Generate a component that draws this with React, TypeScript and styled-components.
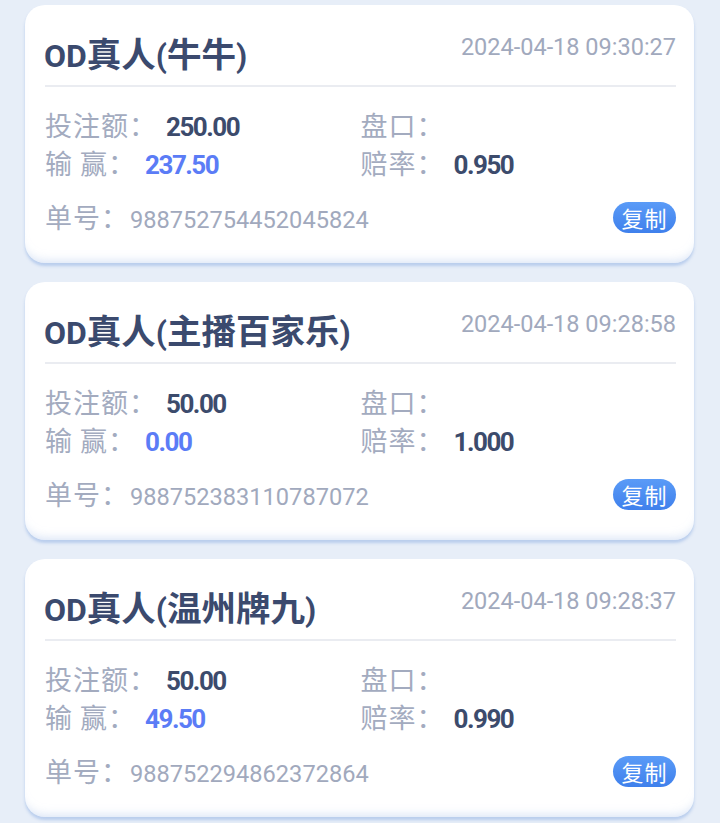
import React from "react";
import styled, { createGlobalStyle } from "styled-components";

const GlobalStyle = createGlobalStyle`
  html, body {
    margin: 0;
    padding: 0;
    background: #e7eef8;
  }
  body {
    font-family: "Roboto", "Noto Sans CJK SC", sans-serif;
    -webkit-font-smoothing: antialiased;
  }
`;

const Page = styled.div`
  display: flex;
  flex-direction: column;
  gap: 19px;
  padding: 5px 26px 8px 25px;
  background: #e7eef8;
  min-height: 823px;
  box-sizing: border-box;
`;

const Card = styled.div`
  background: #ffffff;
  border-radius: 20px;
  padding: 27px 18px 24px 20px;
  box-shadow: inset 0 -9px 10px -7px rgba(186, 206, 238, 0.55),
    0 3px 3px rgba(178, 200, 235, 0.85);
  box-sizing: border-box;
`;

const Header = styled.div`
  display: flex;
  justify-content: space-between;
  align-items: flex-start;
  padding-bottom: 10px;
  border-bottom: 2px solid #eaecf1;
`;

const Title = styled.h2`
  margin: 3px 0 0 -1px;
  height: 40px;
  font-family: "Roboto", "Noto Sans CJK SC", sans-serif;
  font-size: 32px;
  line-height: 40px;
  font-weight: 700;
  color: #3b4a6e;
  white-space: nowrap;
`;

const Han = styled.span`
  font-family: "Noto Sans CJK SC", sans-serif;
  font-size: 34.5px;
  line-height: 1;
  font-weight: 700;
`;

const Time = styled.span`
  font-family: "Roboto", sans-serif;
  font-size: 23.5px;
  line-height: 30px;
  color: #a1a9bd;
  white-space: nowrap;
`;

const Grid = styled.div`
  display: grid;
  grid-template-columns: 1fr 1fr;
  margin-top: 19px;
`;

const Field = styled.div`
  line-height: 38px;
  height: 38px;
  white-space: nowrap;
`;

const Label = styled.span`
  font-family: "Noto Sans CJK SC", sans-serif;
  font-size: 27px;
  letter-spacing: 1px;
  color: #a3abbf;
`;

const Value = styled.span<{ $accent?: boolean }>`
  margin-left: 9px;
  font-family: "Roboto", sans-serif;
  font-size: 26px;
  font-weight: 700;
  letter-spacing: -1.5px;
  color: ${(p) => (p.$accent ? "#5b7cf6" : "#3c4b6c")};
`;

const Footer = styled.div`
  display: flex;
  justify-content: space-between;
  align-items: center;
  margin-top: 19px;
  height: 38px;
`;

const OrderLine = styled.div`
  line-height: 38px;
  white-space: nowrap;
`;

const OrderNo = styled.span`
  margin-left: 1px;
  font-family: "Roboto", sans-serif;
  font-size: 23.6px;
  color: #a1a9bd;
`;

const CopyButton = styled.button`
  width: 63px;
  height: 31px;
  margin-bottom: 6px;
  padding: 0;
  border: none;
  border-radius: 16px;
  background: linear-gradient(180deg, #5a9bf7 0%, #3f80ec 100%);
  color: #ffffff;
  font-family: "Noto Sans CJK SC", sans-serif;
  font-size: 22px;
  line-height: 31px;
  letter-spacing: 1px;
  cursor: pointer;
`;

type Bet = {
  title: string;
  time: string;
  stake: string;
  win: string;
  odds: string;
  order: string;
};

const bets: Bet[] = [
  {
    title: "OD真人(牛牛)",
    time: "2024-04-18 09:30:27",
    stake: "250.00",
    win: "237.50",
    odds: "0.950",
    order: "988752754452045824",
  },
  {
    title: "OD真人(主播百家乐)",
    time: "2024-04-18 09:28:58",
    stake: "50.00",
    win: "0.00",
    odds: "1.000",
    order: "988752383110787072",
  },
  {
    title: "OD真人(温州牌九)",
    time: "2024-04-18 09:28:37",
    stake: "50.00",
    win: "49.50",
    odds: "0.990",
    order: "988752294862372864",
  },
];

const renderTitle = (t: string) =>
  t.split(/([\u4e00-\u9fff]+)/).map((part, i) =>
    /[\u4e00-\u9fff]/.test(part) ? <Han key={i}>{part}</Han> : <React.Fragment key={i}>{part}</React.Fragment>
  );

const BetCard = ({ bet }: { bet: Bet }) => (
  <Card>
    <Header>
      <Title>{renderTitle(bet.title)}</Title>
      <Time>{bet.time}</Time>
    </Header>
    <Grid>
      <Field>
        <Label>投注额：</Label>
        <Value>{bet.stake}</Value>
      </Field>
      <Field>
        <Label>盘口：</Label>
      </Field>
      <Field>
        <Label>输 赢：</Label>
        <Value $accent>{bet.win}</Value>
      </Field>
      <Field>
        <Label>赔率：</Label>
        <Value>{bet.odds}</Value>
      </Field>
    </Grid>
    <Footer>
      <OrderLine>
        <Label>单号：</Label>
        <OrderNo>{bet.order}</OrderNo>
      </OrderLine>
      <CopyButton type="button">复制</CopyButton>
    </Footer>
  </Card>
);

export default function App() {
  return (
    <>
      <GlobalStyle />
      <Page>
        {bets.map((b) => (
          <BetCard key={b.order} bet={b} />
        ))}
      </Page>
    </>
  );
}
